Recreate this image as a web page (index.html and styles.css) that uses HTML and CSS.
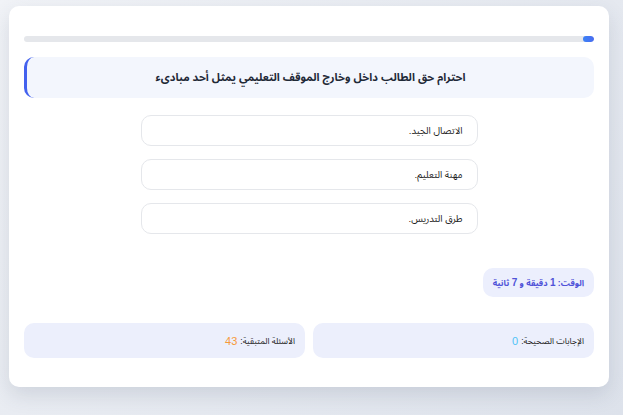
FILE: index.html
```html
<!DOCTYPE html>
<html lang="ar" dir="rtl">
<head>
<meta charset="utf-8">
<title>اختبار</title>
<link rel="stylesheet" href="styles.css">
</head>
<body>
<div class="quiz-card">
    <div class="progress">
        <div class="progress-fill" style="width: 2%"></div>
    </div>
    <div class="question">احترام حق الطالب داخل وخارج الموقف التعليمي يمثل أحد مبادىء</div>
    <div class="options">
        <div class="option">الاتصال الجيد.</div>
        <div class="option">مهنة التعليم.</div>
        <div class="option">طرق التدريس.</div>
    </div>
    <div class="timer">الوقت: <span class="num">1</span> دقيقة و <span class="num">7</span> ثانية</div>
    <div class="stats">
        <div class="stat">الإجابات الصحيحة: <span class="correct">0</span></div>
        <div class="stat">الأسئلة المتبقية: <span class="remaining">43</span></div>
    </div>
</div>
</body>
</html>
```

FILE: styles.css
```css
html, body {
    margin: 0;
    padding: 0;
    height: 100%;
}
body {
    background: linear-gradient(135deg, #f1f3f7 0%, #dde2eb 100%);
    font-family: "Liberation Sans", "Noto Sans Arabic", sans-serif;
    color: #1f2937;
    overflow: hidden;
}
.quiz-card {
    width: 570px;
    margin: 6px 14px 0 10px;
    padding: 30px 15px 29px;
    background: #fff;
    border-radius: 10px;
    box-shadow: 0 8px 20px rgba(60, 72, 100, 0.15);
}
.progress {
    height: 6px;
    background: #e5e7eb;
    border-radius: 3px;
    overflow: hidden;
}
.progress-fill {
    height: 100%;
    background: linear-gradient(90deg, #3b82f6, #4a6cf0);
    border-radius: 3px;
}
.question {
    margin-top: 15px;
    height: 41px;
    display: flex;
    align-items: center;
    justify-content: center;
    background: #f3f6fd;
    border-left: 3px solid #4361ee;
    border-radius: 10px;
    font-size: 11px;
    font-weight: bold;
    color: #1f2937;
}
.options {
    width: 337px;
    margin: 17px auto 0;
    display: flex;
    flex-direction: column;
    gap: 13px;
}
.option {
    height: 29px;
    display: flex;
    align-items: center;
    padding: 0 14px;
    border: 1px solid #e5e7eb;
    border-radius: 10px;
    font-size: 9.5px;
    color: #222;
}
.timer {
    display: inline-block;
    margin-top: 34px;
    padding: 0 10px;
    height: 29px;
    line-height: 29px;
    background: #eceffd;
    border-radius: 10px;
    font-size: 8.5px;
    font-weight: bold;
    color: #4f52d8;
}
.timer .num {
    font-size: 10px;
}
.stats {
    margin-top: 26px;
    display: flex;
    gap: 8px;
}
.stat {
    flex: 1;
    height: 35px;
    display: flex;
    align-items: center;
    padding: 0 10px;
    background: #eceffc;
    border-radius: 10px;
    font-size: 8.5px;
    color: #222;
}
.correct, .remaining {
    font-size: 11px;
    margin-right: 3px;
}
.correct {
    color: #4fc3f7;
}
.remaining {
    color: #f7993a;
}
```
